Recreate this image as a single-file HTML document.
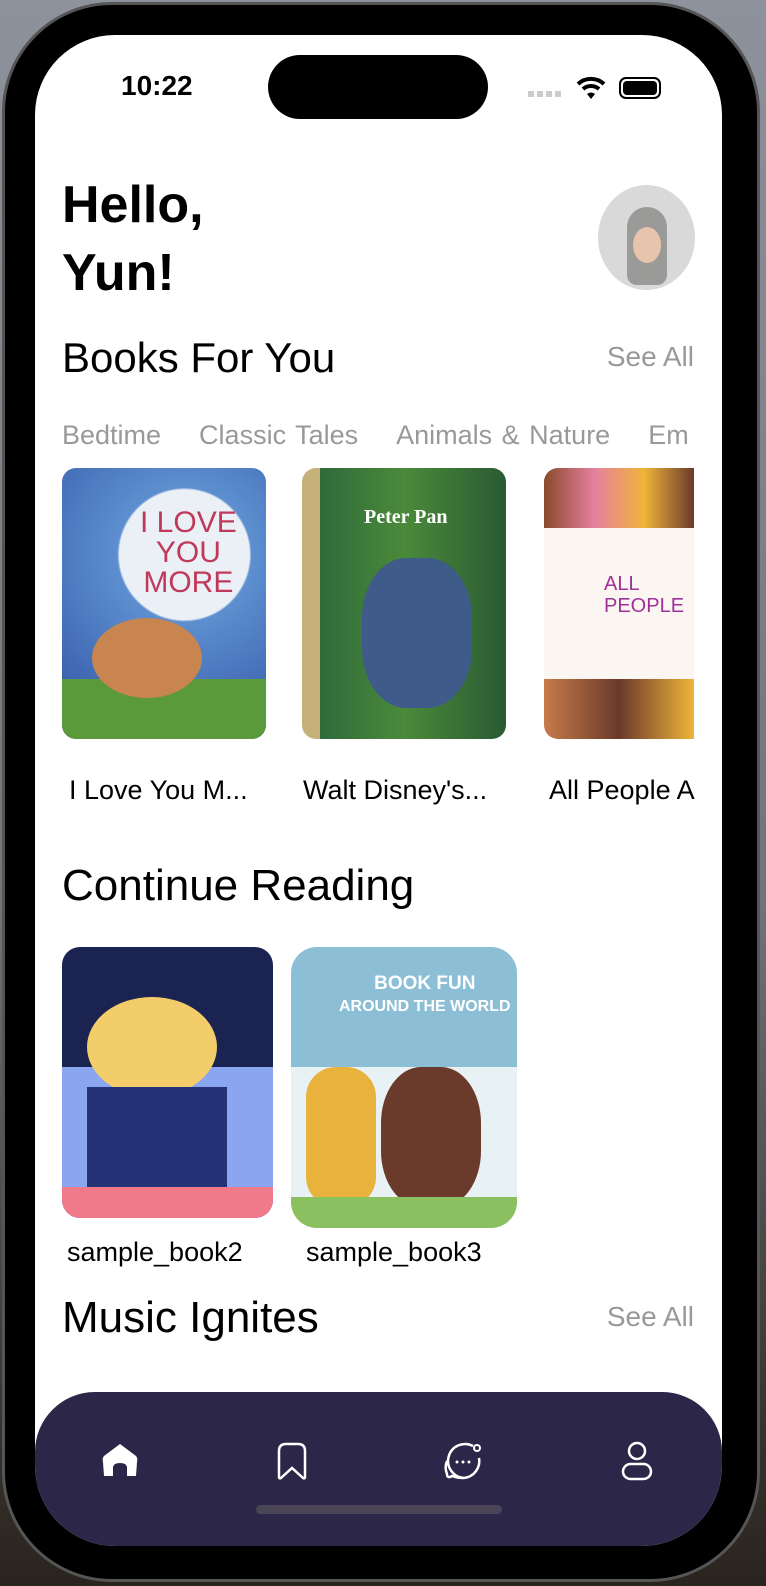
<!DOCTYPE html>
<html><head><meta charset="utf-8"><style>
*{margin:0;padding:0;box-sizing:border-box}
body{width:766px;height:1586px;overflow:hidden;background:linear-gradient(#8d929c 0,#70747c 900px,#3a3530 1400px,#2a241f 1586px);font-family:"Liberation Sans",sans-serif;position:relative}
.bezel{position:absolute;left:2px;top:2px;width:758px;height:1580px;border-radius:110px;background:#000;border:3px solid #555}
.screen{position:absolute;left:35px;top:35px;width:687px;height:1511px;border-radius:80px;background:#fff;overflow:hidden}
.a{position:absolute}
.t{position:absolute;white-space:nowrap;color:#000}
.cover{position:absolute;border-radius:14px;overflow:hidden}
.nav{position:absolute;left:0;top:1357px;width:687px;height:160px;background:#2c2748;border-radius:60px 60px 0 0}
</style></head><body>
<div class="bezel"></div>
<div class="screen">
 <div class="a" style="left:233px;top:20px;width:220px;height:64px;border-radius:32px;background:#000"></div>
 <div class="t" style="left:86px;top:35px;font-size:28px;font-weight:bold">10:22</div>
 <div class="a" style="left:493px;top:56px;width:34px;height:6px;background:repeating-linear-gradient(90deg,#ccc 0 6px,transparent 6px 9px)"></div>
 <svg class="a" style="left:541px;top:41px" width="30" height="24" viewBox="0 0 30 24"><path d="M2 8 A19 19 0 0 1 28 8" stroke="#000" stroke-width="4" fill="none"/><path d="M7 13 A12 12 0 0 1 23 13" stroke="#000" stroke-width="4" fill="none"/><path d="M11 18 L15 23 L19 18 A6 6 0 0 0 11 18Z" fill="#000"/></svg>
 <div class="a" style="left:584px;top:42px;width:42px;height:22px;border:2px solid #000;border-radius:7px;padding:2px"><div style="width:100%;height:100%;background:#000;border-radius:4px"></div></div>
 <div class="t" style="left:27px;top:136px;font-size:52px;font-weight:bold;line-height:68px">Hello,<br>Yun!</div>
 <div class="a" style="left:563px;top:150px;width:97px;height:105px;border-radius:50%;background:#d9d9d9"></div>
 <div class="a" style="left:592px;top:172px;width:40px;height:78px;border-radius:20px 20px 10px 10px;background:#9a9a98"></div>
 <div class="a" style="left:598px;top:192px;width:28px;height:36px;border-radius:50%;background:#e9c4ad"></div>
 <div class="t" style="left:27px;top:299px;font-size:42px">Books For You</div>
 <div class="t" style="right:28px;top:306px;font-size:28px;color:#999">See All</div>
 <div class="t" style="left:27px;top:385px;font-size:27px;color:#999;word-spacing:2px">Bedtime&nbsp;&nbsp;&nbsp;&nbsp;Classic Tales&nbsp;&nbsp;&nbsp;&nbsp;Animals &amp; Nature&nbsp;&nbsp;&nbsp;&nbsp;Em</div>
 <div class="cover" style="left:27px;top:433px;width:204px;height:271px;background:radial-gradient(circle at 60% 32%,#eaf0f6 0 65px,#5d8fd0 67px,#2d4fa0 100%)">
  <div class="a" style="left:0;bottom:0;width:100%;height:60px;background:#5a9a3a"></div>
  <div class="a" style="left:30px;top:150px;width:110px;height:80px;border-radius:50%;background:#c88550"></div>
  <div class="t" style="left:78px;top:40px;font-size:30px;color:#c0395a;line-height:30px;text-align:center">I LOVE<br>YOU<br>MORE</div>
 </div>
 <div class="cover" style="left:267px;top:433px;width:204px;height:271px;background:linear-gradient(90deg,#c6b07a 0 18px,#2f6a3a 18px,#4a8a3a 50%,#2a5a33)">
  <div class="a" style="left:60px;top:90px;width:110px;height:150px;border-radius:40%;background:#3e5b8a"></div>
  <div class="t" style="left:62px;top:38px;font-size:20px;font-weight:bold;color:#fff;font-family:'Liberation Serif',serif">Peter Pan</div>
 </div>
 <div class="cover" style="left:509px;top:433px;width:150px;height:271px;border-radius:14px 0 0 14px;background:#fbf6f2">
  <div class="a" style="left:0;top:0;width:150px;height:60px;background:linear-gradient(90deg,#8a4a2a,#e57fa0,#f0b43a,#6a3a2a)"></div>
  <div class="a" style="left:0;bottom:0;width:150px;height:60px;background:linear-gradient(90deg,#c87a4a,#6a3a2a,#f0b43a)"></div>
  <div class="t" style="left:60px;top:105px;font-size:20px;color:#a0309a;line-height:22px">ALL<br>PEOPLE</div>
 </div>
 <div class="t" style="left:34px;top:740px;font-size:27px">I Love You M...</div>
 <div class="t" style="left:268px;top:740px;font-size:27px">Walt Disney's...</div>
 <div class="t" style="left:514px;top:740px;font-size:27px">All People A</div>
 <div class="t" style="left:27px;top:826px;font-size:44px">Continue Reading</div>
 <div class="cover" style="left:27px;top:912px;width:211px;height:271px;border-radius:18px;background:#1b2450">
  <div class="a" style="left:0;top:120px;width:211px;height:151px;background:#8aa6f0"></div>
  <div class="a" style="left:25px;top:50px;width:130px;height:100px;border-radius:50%;background:#f3cd6a"></div>
  <div class="a" style="left:25px;top:140px;width:140px;height:110px;background:#253275"></div>
  <div class="a" style="left:0;top:240px;width:211px;height:31px;background:#f07a8a"></div>
 </div>
 <div class="cover" style="left:256px;top:912px;width:226px;height:281px;border-radius:26px;background:linear-gradient(#8cbfd6 0 120px,#e8f1f4 120px)">
  <div class="t" style="left:48px;top:26px;font-size:19px;font-weight:bold;color:#fff;line-height:22px;text-align:center">BOOK FUN<br><span style="font-size:16px">AROUND THE WORLD</span></div>
  <div class="a" style="left:15px;top:120px;width:70px;height:140px;border-radius:30px;background:#e9b23c"></div>
  <div class="a" style="left:90px;top:120px;width:100px;height:140px;border-radius:40%;background:#6a3a2a"></div>
  <div class="a" style="left:0;top:250px;width:226px;height:31px;background:#8ac060"></div>
 </div>
 <div class="t" style="left:32px;top:1202px;font-size:27px">sample_book2</div>
 <div class="t" style="left:271px;top:1202px;font-size:27px">sample_book3</div>
 <div class="t" style="left:27px;top:1258px;font-size:44px">Music Ignites</div>
 <div class="t" style="right:28px;top:1266px;font-size:28px;color:#999">See All</div>
 <div class="nav">
  <svg class="a" style="left:66px;top:50px" width="38" height="38" viewBox="0 0 38 38"><path d="M19 2 L35 14 Q37 16 36 20 L35 34 L26 34 L26 26 Q26 21 19 21 Q12 21 12 26 L12 34 L3 34 L2 20 Q1 16 3 14Z" fill="#fff"/></svg>
  <svg class="a" style="left:240px;top:49px" width="34" height="40" viewBox="0 0 34 40"><path d="M4 36 L4 10 Q4 3 11 3 L23 3 Q30 3 30 10 L30 36 Q30 38 28 37 L17 27 L6 37 Q4 38 4 36Z" stroke="#fff" stroke-width="2.5" fill="none"/></svg>
  <svg class="a" style="left:408px;top:48px" width="42" height="42" viewBox="0 0 42 42"><path d="M30 6 A17 17 0 1 0 21 38 Q14 38 9 36 Q4 39 4 34 A17 17 0 0 1 4 21" stroke="#fff" stroke-width="2.5" fill="none"/><path d="M36 18 A17 17 0 0 1 21 38" stroke="#fff" stroke-width="2.5" fill="none"/><circle cx="34" cy="8" r="3" stroke="#fff" stroke-width="2" fill="none"/><circle cx="14" cy="22" r="1.5" fill="#fff"/><circle cx="20" cy="22" r="1.5" fill="#fff"/><circle cx="26" cy="22" r="1.5" fill="#fff"/></svg>
  <svg class="a" style="left:585px;top:48px" width="34" height="42" viewBox="0 0 34 42"><circle cx="17" cy="11" r="8" stroke="#fff" stroke-width="2.5" fill="none"/><rect x="3" y="24" width="28" height="15" rx="7.5" stroke="#fff" stroke-width="2.5" fill="none"/></svg>
  <div class="a" style="left:221px;top:113px;width:246px;height:9px;border-radius:5px;background:#4a4658"></div>
 </div>
</div>
</body></html>
